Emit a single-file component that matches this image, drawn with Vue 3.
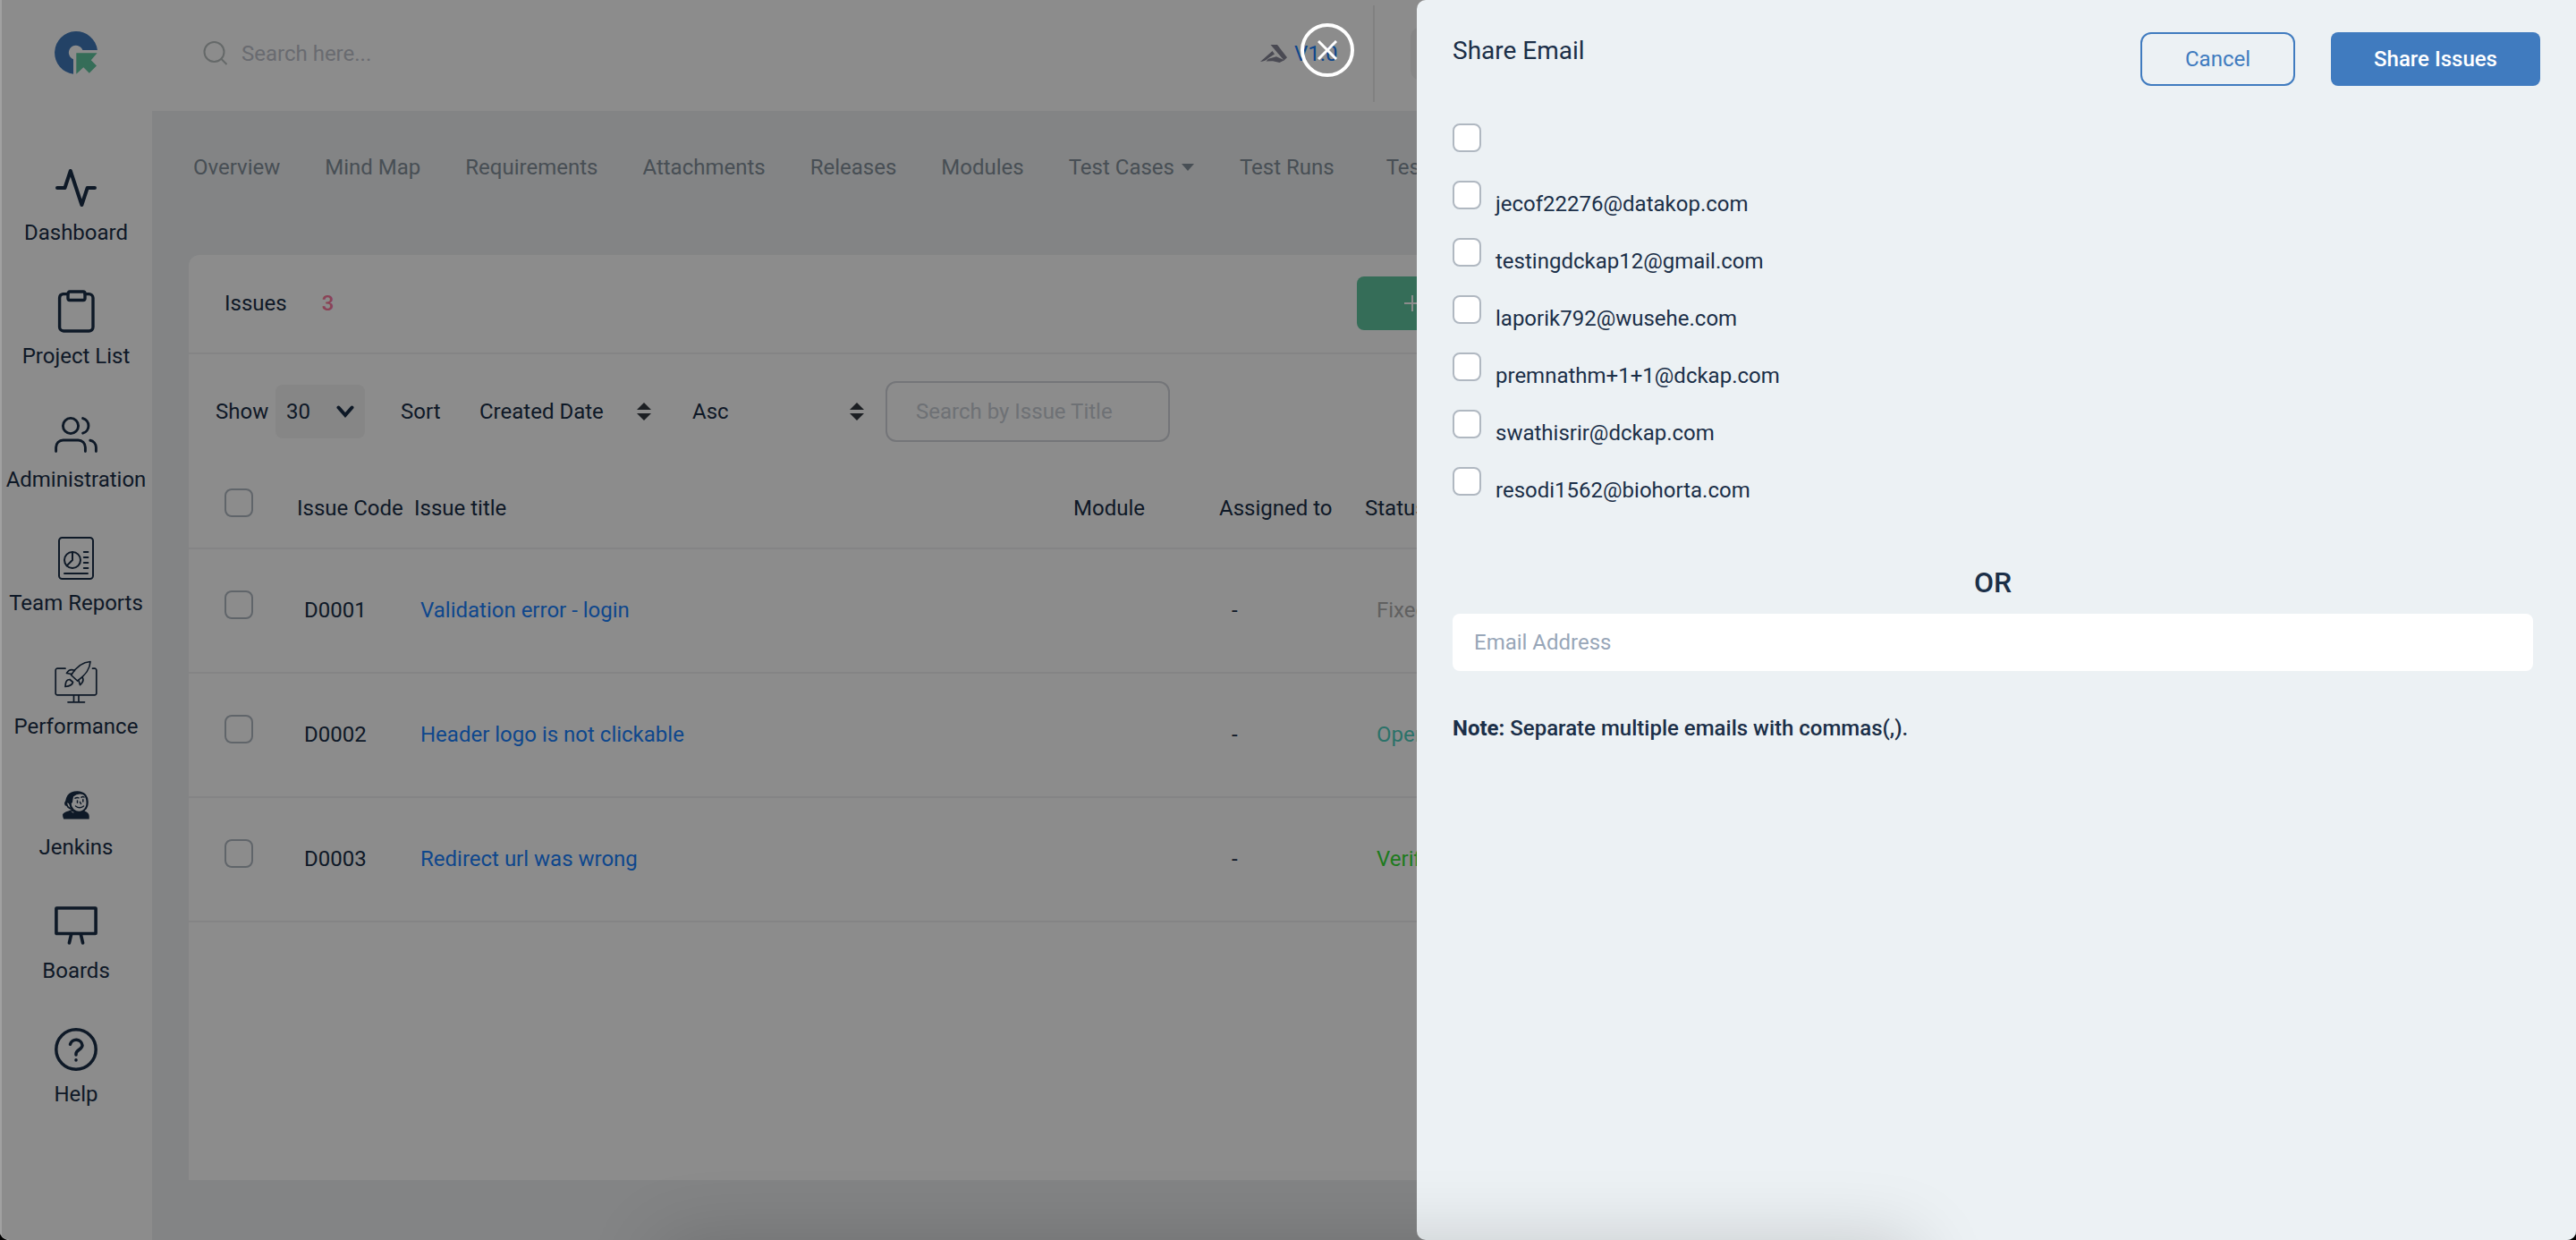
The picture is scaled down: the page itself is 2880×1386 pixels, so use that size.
<script setup>
const menu = [
  { id: 'dashboard', label: 'Dashboard' },
  { id: 'projects', label: 'Project List' },
  { id: 'admin', label: 'Administration' },
  { id: 'reports', label: 'Team Reports' },
  { id: 'performance', label: 'Performance' },
  { id: 'jenkins', label: 'Jenkins' },
  { id: 'boards', label: 'Boards' },
  { id: 'help', label: 'Help' },
]

const tabs = [
  { label: 'Overview' },
  { label: 'Mind Map' },
  { label: 'Requirements' },
  { label: 'Attachments' },
  { label: 'Releases' },
  { label: 'Modules' },
  { label: 'Test Cases', menu: true },
  { label: 'Test Runs' },
  { label: 'Test Lab' },
]

const issues = [
  { code: 'D0001', title: 'Validation error - login', status: 'Fixed', tone: 'fixed' },
  { code: 'D0002', title: 'Header logo is not clickable', status: 'Open', tone: 'open' },
  { code: 'D0003', title: 'Redirect url was wrong', status: 'Verified', tone: 'verified' },
]

const emails = [
  '',
  'jecof22276@datakop.com',
  'testingdckap12@gmail.com',
  'laporik792@wusehe.com',
  'premnathm+1+1@dckap.com',
  'swathisrir@dckap.com',
  'resodi1562@biohorta.com',
]
</script>

<template>
  <div class="window">
    <div class="app">
      <aside class="sidebar">
        <svg class="logo" width="48" height="48" viewBox="0 0 48 48">
          <path fill="#4079bb" d="M21 47.8A24 24 0 1 1 47.9 21H31.4A8 8 0 1 0 21 31.2Z" />
          <path fill="#62c6a0" d="M24.3 24.3H47.6L40.8 32.2 47 38.6 38.8 46.8 32.3 40.3 24.3 47.8Z" />
        </svg>
        <nav class="menu">
          <a v-for="item in menu" :key="item.id" class="menu-item">
            <span class="menu-icon" :class="item.id">
              <svg v-if="item.id === 'dashboard'" width="48" height="48" viewBox="0 0 48 48" class="line" stroke-width="4">
                <path d="M3 24H11.5L17.8 5 30.4 43 36.7 24H45" />
              </svg>
              <svg v-else-if="item.id === 'projects'" width="48" height="48" viewBox="0 0 48 48" class="line" stroke-width="3.4">
                <path d="M15 4.600H9.500A4.500 4.500 0 0 0 5.600 9V41.500A4.500 4.500 0 0 0 10 46H38.500A4.500 4.500 0 0 0 43 41.500V9A4.500 4.500 0 0 0 38.500 4.600H34" />
                <rect x="15" y="2" width="19" height="9.500" rx="2" />
              </svg>
              <svg v-else-if="item.id === 'admin'" width="48" height="48" viewBox="0 0 48 48" class="line" stroke-width="2.900">
                <circle cx="18" cy="14" r="8.600" />
                <path d="M1.600 42.500V38A8 8 0 0 1 9.600 30H26.400A8 8 0 0 1 34.400 38V42.500M31.600 5.600A8.600 8.600 0 0 1 31.600 22.200M39.800 30.300A8 8 0 0 1 46.400 38V42.500" />
              </svg>
              <svg v-else-if="item.id === 'reports'" width="48" height="48" viewBox="0 0 48 48" class="line" stroke-width="2">
                <rect x="5" y="1" width="38" height="46" rx="3.500" />
                <circle cx="20" cy="26" r="9" />
                <path d="M20 17V26L13.600 32.400M32.800 17H37.400M32.800 23H37.400M32.800 29H37.400M32.800 35H37.400M11 41H37" />
              </svg>
              <svg v-else-if="item.id === 'performance'" width="48" height="48" viewBox="0 0 48 48" class="line" stroke-width="1.700">
                <path d="M12 9.200H3.500A2 2 0 0 0 1.200 11.500V36.500A2 2 0 0 0 3.500 38.800H44.500A2 2 0 0 0 46.800 36.500V11.500A2 2 0 0 0 44.500 9.200H42.500M21.500 39V46.600M27 39V46.600M15 46.800H33.500" />
                <path d="M40 1.500C32 2 25.500 5.500 18.500 16.500L25.500 23C35.500 16 39.500 10 40 1.500ZM22.500 11.500C18.500 9.500 15.500 11 13.500 14.500L19.500 15.500M31 19C33 22 31.500 25 28.500 27.500L26.800 22M17 21.500C13.500 21.500 12 24.500 12 29.500C17 29 20 27.500 20.500 24.500L17 21.500" />
              </svg>
              <svg v-else-if="item.id === 'jenkins'" width="30" height="32" viewBox="0 0 30 32">
                <path fill="#1b2f48" d="M0 26.500Q1 24 6.500 22.500L10 21Q5 19.500 4.500 17Q1.500 16.500 2.200 13Q3.500 11 4 8Q6 2 13 .6Q21 -.8 26 4Q30 9 28.200 17Q27 21 24.500 22.500Q29.500 24 29.700 28V31.600H1.200Q0 29 0 26.500Z" />
                <path fill="#fff" d="M12 6.500Q16.500 2.500 22.500 4Q26.300 6 26.500 13Q26.500 19 22.500 21.500Q17.500 24.500 12.500 20.500Q9.500 17.500 9.700 14Q11.500 13 11.300 10.500Z" />
                <path fill="#fff" d="M5 13.500Q7 13 7.500 15.500L8.500 19Q5.500 17 5 13.500ZM9 22.500L13 24 11.500 24.600Z" />
                <path fill="none" stroke="#1b2f48" stroke-width="1.500" stroke-linecap="round" d="M14 8.200Q16 6.800 18 7.800M21 7.200Q22.500 6 24 7M16.500 11V13.200M22.800 9.800V12M19.500 12.500L20.500 14.500M14.500 17Q19 20.500 23.500 17" />
              </svg>
              <svg v-else-if="item.id === 'boards'" width="48" height="48" viewBox="0 0 48 48" class="line" stroke-width="3.600">
                <rect x="1.900" y="4" width="44.200" height="28.500" rx=".5" />
                <path d="M18.500 34L16.400 43M29.500 34L31.600 43" />
              </svg>
              <svg v-else width="48" height="48" viewBox="0 0 48 48" class="line" stroke-width="3.500">
                <circle cx="24" cy="24" r="22.200" />
                <path d="M17.500 18.200A6.900 6.900 0 0 1 31 19.400C31 23.800 24 24.600 24 28.800V30" />
                <path d="M24 35.800V36" />
              </svg>
            </span>
            <span class="menu-label">{{ item.label }}</span>
          </a>
        </nav>
      </aside>

      <div class="main">
        <header class="topbar">
          <svg class="search-icon" width="28" height="28" viewBox="0 0 28 28" fill="none" stroke="#b9bfbf" stroke-width="2">
            <circle cx="12.500" cy="12" r="11" />
            <path d="M20 19.500L26.500 26" />
          </svg>
          <span class="search-text">Search here...</span>
          <div class="release">
            <svg width="30" height="20" viewBox="0 0 30 20" fill="#888898">
              <path d="M11.500 0H19L30 14.200 26.500 17.500Z" />
              <path d="M0 19L13.500 7 16 10.500 9 15Q6 18.500 0 19Z" />
              <path d="M9 15.800L18 13.200 27 17.200 21.500 20 14 18.200 6.500 18.600Z" />
            </svg>
            <span>V1.0</span>
          </div>
          <div class="divider"></div>
          <div class="profile"></div>
        </header>

        <nav class="tabs">
          <a v-for="tab in tabs" :key="tab.label" class="tab">
            {{ tab.label }}<i v-if="tab.menu" class="caret"></i>
          </a>
        </nav>

        <section class="card">
          <div class="card-head">
            <span>Issues</span>
            <span class="count">3</span>
            <button class="add">
              <svg width="18" height="18" viewBox="0 0 18 18" stroke="#fff" stroke-width="2"><path d="M9 0V18M0 9H18" /></svg>
            </button>
          </div>

          <div class="toolbar">
            <span class="show">Show</span>
            <div class="size">
              <span>30</span>
              <svg width="20" height="16" viewBox="0 0 20 16" fill="none" stroke="#1b2f48" stroke-width="4" stroke-linecap="round"><path d="M2.500 3.500L10 12 17.500 3.500" /></svg>
            </div>
            <span class="sort">Sort</span>
            <div class="select by">
              <span>Created Date</span>
              <svg width="16" height="20" viewBox="0 0 16 20" fill="#343a40"><path d="M8 0L16 8H0ZM0 12H16L8 20Z" /></svg>
            </div>
            <div class="select dir">
              <span>Asc</span>
              <svg width="16" height="20" viewBox="0 0 16 20" fill="#343a40"><path d="M8 0L16 8H0ZM0 12H16L8 20Z" /></svg>
            </div>
            <div class="filter">Search by Issue Title</div>
          </div>

          <div class="row head">
            <span><i class="box"></i></span>
            <span>Issue Code</span>
            <span>Issue title</span>
            <span>Module</span>
            <span>Assigned to</span>
            <span>Status</span>
          </div>
          <div v-for="issue in issues" :key="issue.code" class="row item">
            <span><i class="box"></i></span>
            <span class="code">{{ issue.code }}</span>
            <a class="title">{{ issue.title }}</a>
            <span></span>
            <span class="who">-</span>
            <span class="status" :class="issue.tone">{{ issue.status }}</span>
          </div>
        </section>
      </div>
    </div>

    <div class="overlay"></div>

    <button class="close">
      <svg width="22" height="22" viewBox="0 0 22 22" stroke="#fff" stroke-width="3"><path d="M1 1L21 21M21 1L1 21" /></svg>
    </button>

    <section class="panel">
      <header class="panel-head">
        <h2>Share Email</h2>
        <div class="actions">
          <button class="btn cancel">Cancel</button>
          <button class="btn share">Share Issues</button>
        </div>
      </header>
      <ul class="emails">
        <li v-for="(email, i) in emails" :key="i">
          <i class="box"></i>
          <span>{{ email }}</span>
        </li>
      </ul>
      <div class="or">OR</div>
      <div class="email-input">Email Address</div>
      <p class="note"><b>Note:</b> Separate multiple emails with commas(,).</p>
    </section>

    <div class="dock-shadow"></div>
    <div class="edge"></div>
  </div>
</template>

<style>
body {
  margin: 0;
  background: #000;
}
</style>

<style scoped>
.window {
  position: relative;
  width: 2880px;
  height: 1386px;
  overflow: hidden;
  border-radius: 0 0 10px 10px;
  background: #fff;
  font-family: Roboto, sans-serif;
  font-size: 24px;
  line-height: 28px;
  color: #1b2f48;
}
.app {
  display: flex;
  height: 100%;
}
.sidebar {
  box-sizing: border-box;
  width: 170px;
  flex: none;
  padding-top: 35px;
  background: #fff;
  display: flex;
  flex-direction: column;
  align-items: center;
}
.logo {
  flex: none;
}
.menu {
  margin-top: 103px;
  display: flex;
  flex-direction: column;
  gap: 50px;
}
.menu-item {
  display: flex;
  flex-direction: column;
  align-items: center;
  gap: 12px;
}
.menu-icon {
  display: flex;
  align-items: center;
  justify-content: center;
  width: 48px;
  height: 48px;
}
.menu-icon.jenkins {
  box-sizing: border-box;
  height: 45px;
  padding-top: 2px;
}
.menu-label {
  line-height: 28px;
  white-space: nowrap;
}
.line {
  fill: none;
  stroke: #1b2f48;
  stroke-linecap: round;
  stroke-linejoin: round;
}
.main {
  flex: 1;
  min-width: 0;
  display: flex;
  flex-direction: column;
  background: #eef0f2;
}
.topbar {
  box-sizing: border-box;
  display: flex;
  align-items: center;
  height: 124px;
  padding: 0 0 4px 57px;
  background: #fff;
}
.search-icon {
  flex: none;
  margin-right: 15px;
}
.search-text {
  width: 1139px;
  color: #bfc3cd;
}
.release {
  display: flex;
  align-items: center;
  gap: 8px;
  width: 126px;
  color: #1a82ff;
}
.divider {
  width: 2px;
  height: 108px;
  background: #ececec;
}
.profile {
  width: 320px;
  height: 60px;
  margin-left: 40px;
  border-radius: 12px;
  background: #f4f4f4;
}
.tabs {
  display: flex;
  gap: 50px;
  height: 126px;
  padding: 0 0 0 46px;
  align-items: center;
  margin-bottom: 35px;
  color: #84909b;
}
.tab {
  display: flex;
  align-items: center;
  white-space: nowrap;
}
.tab:last-child {
  margin-left: 8px;
}
.caret {
  margin-left: 8px;
  margin-right: 1px;
  border: 7px solid transparent;
  border-top: 8px solid #84909b;
  border-bottom: 0;
}
.card {
  margin-left: 41px;
  height: 1034px;
  border-radius: 12px 12px 0 0;
  background: #fff;
}
.card-head {
  box-sizing: border-box;
  display: flex;
  align-items: center;
  height: 111px;
  padding: 0 0 1px 40px;
  border-bottom: 2px solid #f0f1f2;
}
.count {
  margin-left: 39px;
  font-weight: 500;
  color: #fb7a9f;
}
.add {
  display: flex;
  align-items: center;
  width: 180px;
  height: 60px;
  margin-left: 1144px;
  padding: 0 0 0 53px;
  border: 0;
  border-radius: 8px;
  background: #62c6a0;
}
.toolbar {
  display: flex;
  align-items: center;
  height: 128px;
  padding-left: 30px;
}
.show {
  width: 67px;
}
.size {
  box-sizing: border-box;
  display: flex;
  align-items: center;
  justify-content: space-between;
  width: 100px;
  height: 60px;
  padding: 0 12px;
  border-radius: 8px;
  background: #f4f4f4;
}
.sort {
  width: 88px;
  margin-left: 40px;
}
.select {
  display: flex;
  align-items: center;
  justify-content: space-between;
}
.by {
  width: 192px;
}
.dir {
  width: 192px;
  margin-left: 46px;
}
.filter {
  box-sizing: border-box;
  width: 318px;
  height: 68px;
  margin-left: 24px;
  padding: 18px 32px;
  border: 2px solid #d3d6dc;
  border-radius: 12px;
  color: #c9ced6;
}
.row {
  box-sizing: border-box;
  display: grid;
  grid-template-columns: 81px 131px 737px 163px 163px auto;
  align-items: start;
  height: 139px;
  padding: 46px 0 0 40px;
  border-bottom: 2px solid #f0f1f2;
}
.row > * {
  margin-top: 8px;
  white-space: nowrap;
}
.row > :first-child {
  margin-top: 0;
}
.row.head {
  height: 90px;
  padding-top: 22px;
}
.box {
  box-sizing: border-box;
  display: block;
  width: 32px;
  height: 32px;
  flex: none;
  border: 2px solid #b0b8c1;
  border-radius: 8px;
  background: #fff;
}
.code {
  padding-left: 8px;
}
.title {
  padding-left: 7px;
  color: #1a82ff;
}
.who {
  padding-left: 14px;
}
.status {
  padding-left: 13px;
}
.fixed {
  color: #b0b0b0;
}
.open {
  color: #4fd0bf;
}
.verified {
  color: #37e037;
}
.overlay {
  position: absolute;
  inset: 0;
  background: rgba(0, 0, 0, 0.45);
}
.close {
  position: absolute;
  left: 1454px;
  top: 26px;
  box-sizing: border-box;
  display: flex;
  align-items: center;
  justify-content: center;
  width: 60px;
  height: 60px;
  padding: 0;
  border: 4px solid #fff;
  border-radius: 50%;
  background: none;
}
.panel {
  position: absolute;
  right: 0;
  top: 0;
  box-sizing: border-box;
  width: 1296px;
  height: 1386px;
  padding: 36px 48px 0 40px;
  border-radius: 10px 0 0 10px;
  background: #ecf1f4;
}
.panel-head {
  display: flex;
  justify-content: space-between;
  height: 102px;
  margin-right: -8px;
}
h2 {
  margin: 5px 0 0;
  font-size: 28px;
  line-height: 32px;
  font-weight: 400;
}
.actions {
  display: flex;
  gap: 40px;
}
.btn {
  box-sizing: border-box;
  height: 60px;
  padding: 0;
  font: inherit;
}
.cancel {
  width: 173px;
  border: 2px solid #407bbf;
  border-radius: 12px;
  background: none;
  color: #407bbf;
}
.share {
  width: 234px;
  border: 0;
  border-radius: 8px;
  background: #407bbf;
  color: #fff;
  font-weight: 500;
}
.emails {
  display: flex;
  flex-direction: column;
  gap: 32px;
  margin: 0;
  padding: 0;
  list-style: none;
}
.emails li {
  display: flex;
  gap: 16px;
  height: 32px;
}
.emails span {
  padding-top: 12px;
}
.or {
  margin-top: 77px;
  font-size: 32px;
  line-height: 40px;
  font-weight: 500;
  text-align: center;
}
.email-input {
  box-sizing: border-box;
  height: 64px;
  margin-top: 15px;
  padding: 18px 24px;
  border-radius: 8px;
  background: #fff;
  color: #98a6b8;
}
.note {
  margin: 50px 0 0;
  font-weight: 500;
}
.note b {
  font-weight: 700;
}
.dock-shadow {
  position: absolute;
  left: 740px;
  right: 740px;
  top: 1390px;
  height: 200px;
  box-shadow: 0 0 84px rgba(0, 0, 0, 0.18);
}
.edge {
  position: absolute;
  left: 0;
  top: 0;
  bottom: 0;
  width: 2px;
  background: #a1a1a1;
}
</style>
